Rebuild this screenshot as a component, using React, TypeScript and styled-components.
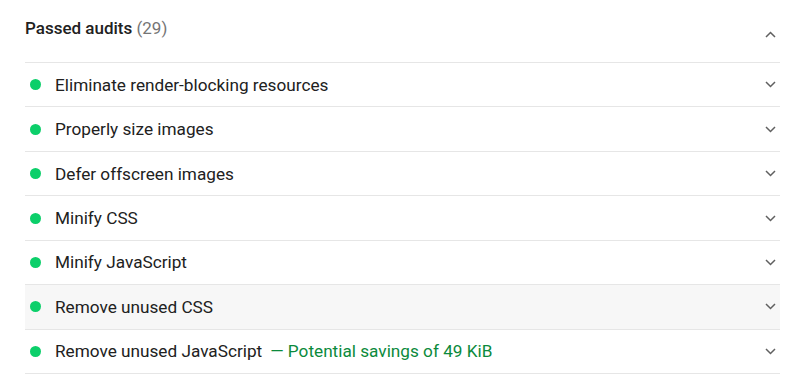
import React from "react";
import styled, { createGlobalStyle } from "styled-components";

const GlobalStyle = createGlobalStyle`
  body {
    margin: 0;
    background: #ffffff;
    font-family: Roboto, "Liberation Sans", Arial, sans-serif;
    color: #212121;
  }
`;

const Group = styled.section`
  padding: 0 20px 0 25px;
`;

const GroupHeader = styled.div`
  display: flex;
  justify-content: space-between;
  height: 62px;
  border-bottom: 1px solid #e6e6e6;
`;

const Title = styled.div`
  padding-top: 18px;
  font-size: 17px;
  font-weight: 500;
  color: #212121;
`;

const Count = styled.span`
  font-weight: 400;
  color: #757575;
`;

const Row = styled.div<{ $hover?: boolean }>`
  display: flex;
  align-items: center;
  height: 43.45px;
  border-bottom: 1px solid #e6e6e6;
  background: ${(p) => (p.$hover ? "#f7f7f7" : "transparent")};
`;

const Dot = styled.span`
  width: 11px;
  height: 11px;
  border-radius: 50%;
  background: #0ccf6a;
  margin: 0 14px 0 5px;
  flex: none;
`;

const Label = styled.span`
  flex: 1;
  font-size: 17.2px;
  color: #212121;
`;

const Savings = styled.span`
  color: #0b8a3c;
  margin-left: 8px;
`;

const ChevronBox = styled.span<{ $up?: boolean }>`
  display: flex;
  align-items: ${(p) => (p.$up ? "flex-start" : "center")};
  padding-top: ${(p) => (p.$up ? "31px" : "0")};
  width: 14px;
  margin-right: 1px;
  color: #606060;
`;

function Chevron({ up }: { up?: boolean }) {
  return (
    <ChevronBox $up={up}>
      <svg width="11" height="7" viewBox="0 0 11 7">
        <polyline
          points={up ? "1,6 5.5,1.5 10,6" : "1,1 5.5,5.5 10,1"}
          fill="none"
          stroke="currentColor"
          strokeWidth="1.5"
        />
      </svg>
    </ChevronBox>
  );
}

const audits = [
  { title: "Eliminate render-blocking resources" },
  { title: "Properly size images" },
  { title: "Defer offscreen images" },
  { title: "Minify CSS" },
  { title: "Minify JavaScript" },
  { title: "Remove unused CSS", hover: true },
  { title: "Remove unused JavaScript", savings: "Potential savings of 49 KiB" },
];

export default function App() {
  return (
    <>
      <GlobalStyle />
      <Group>
        <GroupHeader>
          <Title>
            Passed audits <Count>(29)</Count>
          </Title>
          <Chevron up />
        </GroupHeader>
        {audits.map((a) => (
          <Row key={a.title} $hover={a.hover}>
            <Dot />
            <Label>
              {a.title}
              {a.savings && <Savings>— {a.savings}</Savings>}
            </Label>
            <Chevron />
          </Row>
        ))}
      </Group>
    </>
  );
}
